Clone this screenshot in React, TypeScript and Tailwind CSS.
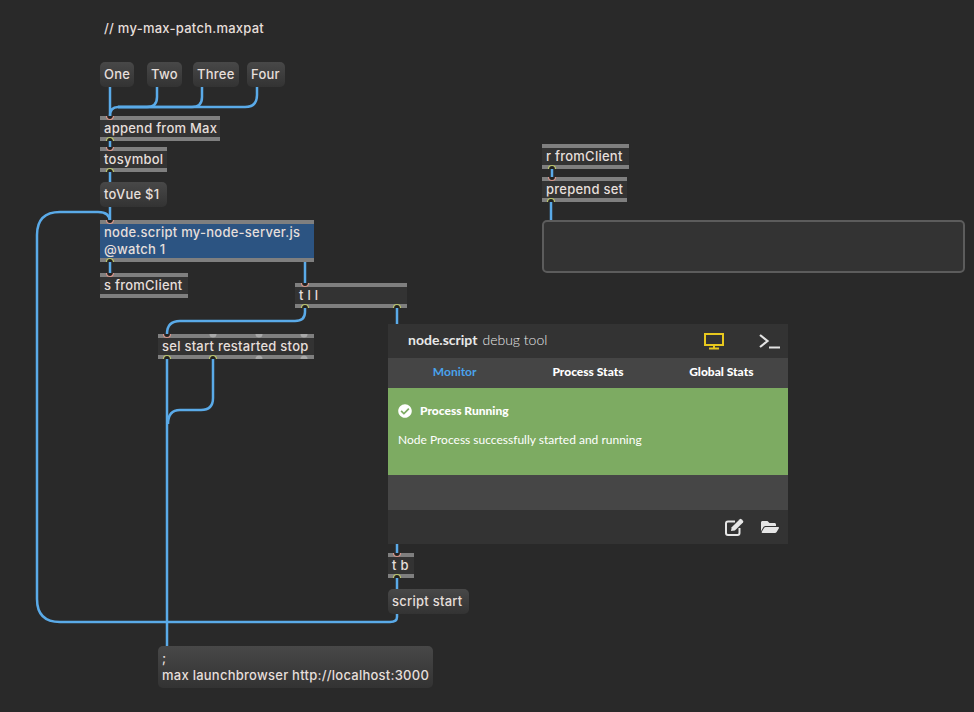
import { ReactNode } from "react";
import { FaCheckCircle, FaFolderOpen } from "react-icons/fa";

const patchFont = "font-['Inter','Liberation_Sans',sans-serif] font-medium text-[13px] leading-[17px] tracking-[0.25px] text-[#e6dfdb] whitespace-nowrap";

function ObjectBox({ className, children }: { className: string; children: ReactNode }) {
  return (
    <div className={`absolute border-y-4 border-[#7f7f7f] px-1 flex flex-col justify-center ${patchFont} ${className}`}>
      {children}
    </div>
  );
}

function MessageBox({ className, children }: { className: string; children: ReactNode }) {
  return (
    <div className={`absolute rounded-[5px] bg-gradient-to-b from-[#484848] to-[#333333] px-1 flex flex-col justify-center ${patchFont} ${className}`}>
      {children}
    </div>
  );
}

const wires = [
  "M110 87V116",
  "M157 87V97Q157 107 147 107H118Q110 107 110 116",
  "M202 87V97Q202 107 192 107H118",
  "M257 87V95Q257 107 245 107H118",
  "M110 141V147",
  "M110 172V182",
  "M110 207V220",
  "M397 614V617Q397 622 390 622H60Q37 622 37 599V235Q37 212 60 212H98Q110 212 110 222",
  "M110 262V273",
  "M305 262V283",
  "M305 308V312Q305 321 295 321H180Q167 321 167 334",
  "M397 308V553",
  "M167 358V646",
  "M213 358V398Q213 410 201 410H180Q168 410 168 424",
  "M397 578V589",
  "M552 169V177",
  "M551 202V220",
];

const inlets: [number, number][] = [
  [110, 116], [110, 147], [110, 220], [110, 273], [305, 283], [167, 334], [397, 553], [552, 177],
];
const outlets: [number, number][] = [
  [110, 141], [110, 172], [110, 262], [305, 308], [397, 308], [167, 359], [213, 359], [397, 578], [552, 169], [551, 202],
];
const freeInlets: [number, number][] = [[213, 334], [259, 334], [304, 334]];
const freeOutlets: [number, number][] = [[259, 359], [304, 359]];

function DebugPanel() {
  return (
    <div className="absolute left-[388px] top-[324px] w-[400px] h-[220px] flex flex-col font-['Lato',sans-serif] text-white">
      <div className="h-[34px] bg-[#333333] flex items-center pl-5 pr-2 pb-[3px] text-[14px] text-[#e8e8e8]">
        <span className="font-bold">node.script</span>
        <span className="ml-[5px] font-light">debug tool</span>
        <svg className="ml-auto mt-[2px]" width="22" height="18" viewBox="0 0 22 18" fill="none" stroke="#e8c81e" strokeWidth="2">
          <rect x="2" y="2" width="18" height="11" />
          <path d="M11 13V16M6 16.5H16" />
        </svg>
        <svg className="ml-[33px] -mr-[2px] mt-[3px]" width="24" height="18" viewBox="0 0 24 18" fill="none" stroke="#e4e4e4" strokeWidth="2.2">
          <path d="M2 3L9.5 9L2 15" />
          <path d="M11 15.5H22" strokeWidth="2" />
        </svg>
      </div>
      <div className="h-[30px] pb-[3px] bg-[#454545] grid grid-cols-3 items-center text-center text-[12px] font-black">
        <span className="text-[#4aa3ec] font-bold">Monitor</span>
        <span>Process Stats</span>
        <span>Global Stats</span>
      </div>
      <div className="h-[87px] bg-[#7dab62] pl-[10px] pt-[15px]">
        <div className="flex items-center gap-2 text-[12px] font-black h-4">
          <FaCheckCircle className="text-[14px]" />
          <span>Process Running</span>
        </div>
        <p className="mt-[13px] text-[12px] leading-4">Node Process successfully started and running</p>
      </div>
      <div className="h-[35px] bg-[#464646]" />
      <div className="h-[34px] bg-[#333333] flex items-center justify-end gap-[17px] pr-[9px] text-[#e6e6e6]">
        <svg width="19" height="18" viewBox="0 0 19 18" fill="none" stroke="currentColor">
          <path d="M10 3.5H3Q1 3.5 1 5.5V15Q1 17 3 17H12.5Q14.5 17 14.5 15V10" strokeWidth="2" />
          <path d="M6 13L6.7 9.3L14.8 1.2Q15.6 .5 16.4 1.2L18 2.8Q18.7 3.6 18 4.4L9.9 12.4Z" fill="currentColor" stroke="none" />
        </svg>
        <FaFolderOpen className="text-[18px]" />
      </div>
    </div>
  );
}

export default function App() {
  return (
    <div className="relative w-[974px] h-[712px] overflow-hidden bg-[#292929]">
      <div className={`absolute left-[104px] top-[20px] ${patchFont}`}>// my-max-patch.maxpat</div>

      <MessageBox className="left-[100px] top-[62px] w-[34px] h-[25px]">One</MessageBox>
      <MessageBox className="left-[147px] top-[62px] w-[35px] h-[25px]">Two</MessageBox>
      <MessageBox className="left-[193px] top-[62px] w-[46px] h-[25px]">Three</MessageBox>
      <MessageBox className="left-[247px] top-[62px] w-[38px] h-[25px]">Four</MessageBox>
      <ObjectBox className="left-[100px] top-[116px] w-[120px] h-[25px] bg-[#333333]">append from Max</ObjectBox>
      <ObjectBox className="left-[100px] top-[147px] w-[67px] h-[25px] bg-[#333333]">tosymbol</ObjectBox>
      <MessageBox className="left-[100px] top-[182px] w-[67px] h-[25px]">toVue $1</MessageBox>
      <ObjectBox className="left-[100px] top-[220px] w-[214px] h-[42px] bg-[#2c5482]">
        <span>node.script my-node-server.js</span>
        <span>@watch 1</span>
      </ObjectBox>
      <ObjectBox className="left-[100px] top-[273px] w-[88px] h-[25px] bg-[#333333]">s fromClient</ObjectBox>
      <ObjectBox className="left-[295px] top-[283px] w-[112px] h-[25px] bg-[#333333]">t l l</ObjectBox>
      <ObjectBox className="left-[158px] top-[334px] w-[156px] h-[25px] bg-[#333333]">sel start restarted stop</ObjectBox>
      <ObjectBox className="left-[388px] top-[553px] w-[26px] h-[25px] bg-[#333333]">t b</ObjectBox>
      <MessageBox className="left-[388px] top-[589px] w-[81px] h-[25px]">script start</MessageBox>
      <MessageBox className="left-[158px] top-[646px] w-[275px] h-[42px]">
        <span>;</span>
        <span>max launchbrowser http://localhost:3000</span>
      </MessageBox>
      <ObjectBox className="left-[542px] top-[144px] w-[87px] h-[25px] bg-[#333333]">r fromClient</ObjectBox>
      <ObjectBox className="left-[542px] top-[177px] w-[85px] h-[25px] bg-[#333333]">prepend set</ObjectBox>
      <div className="absolute left-[542px] top-[220px] w-[423px] h-[53px] rounded-[5px] border-2 border-[#5c5c5c] bg-[#333333]" />

      {/* patch cords and ports sit on top of the boxes, the debug window covers them */}
      <svg className="absolute inset-0" width="974" height="712" fill="none">
        {wires.map((d) => (
          <path key={d} d={d} stroke="#5aaae8" strokeWidth="2.5" />
        ))}
        {inlets.map(([x, y]) => (
          <path key={`${x}-${y}`} d={`M${x - 3.5} ${y}A3.5 3.5 0 0 0 ${x + 3.5} ${y}`} fill="#222222" stroke="#d9968a" strokeWidth="1.2" />
        ))}
        {outlets.map(([x, y]) => (
          <path key={`${x}-${y}`} d={`M${x - 3.5} ${y}A3.5 3.5 0 0 1 ${x + 3.5} ${y}`} fill="#222222" stroke="#bcc66c" strokeWidth="1.2" />
        ))}
        {freeInlets.map(([x, y]) => (
          <path key={`${x}-${y}`} d={`M${x - 3.5} ${y}A3.5 3.5 0 0 0 ${x + 3.5} ${y}Z`} fill="#a8a8a8" />
        ))}
        {freeOutlets.map(([x, y]) => (
          <path key={`${x}-${y}`} d={`M${x - 3.5} ${y}A3.5 3.5 0 0 1 ${x + 3.5} ${y}Z`} fill="#a8a8a8" />
        ))}
      </svg>

      <DebugPanel />
    </div>
  );
}
